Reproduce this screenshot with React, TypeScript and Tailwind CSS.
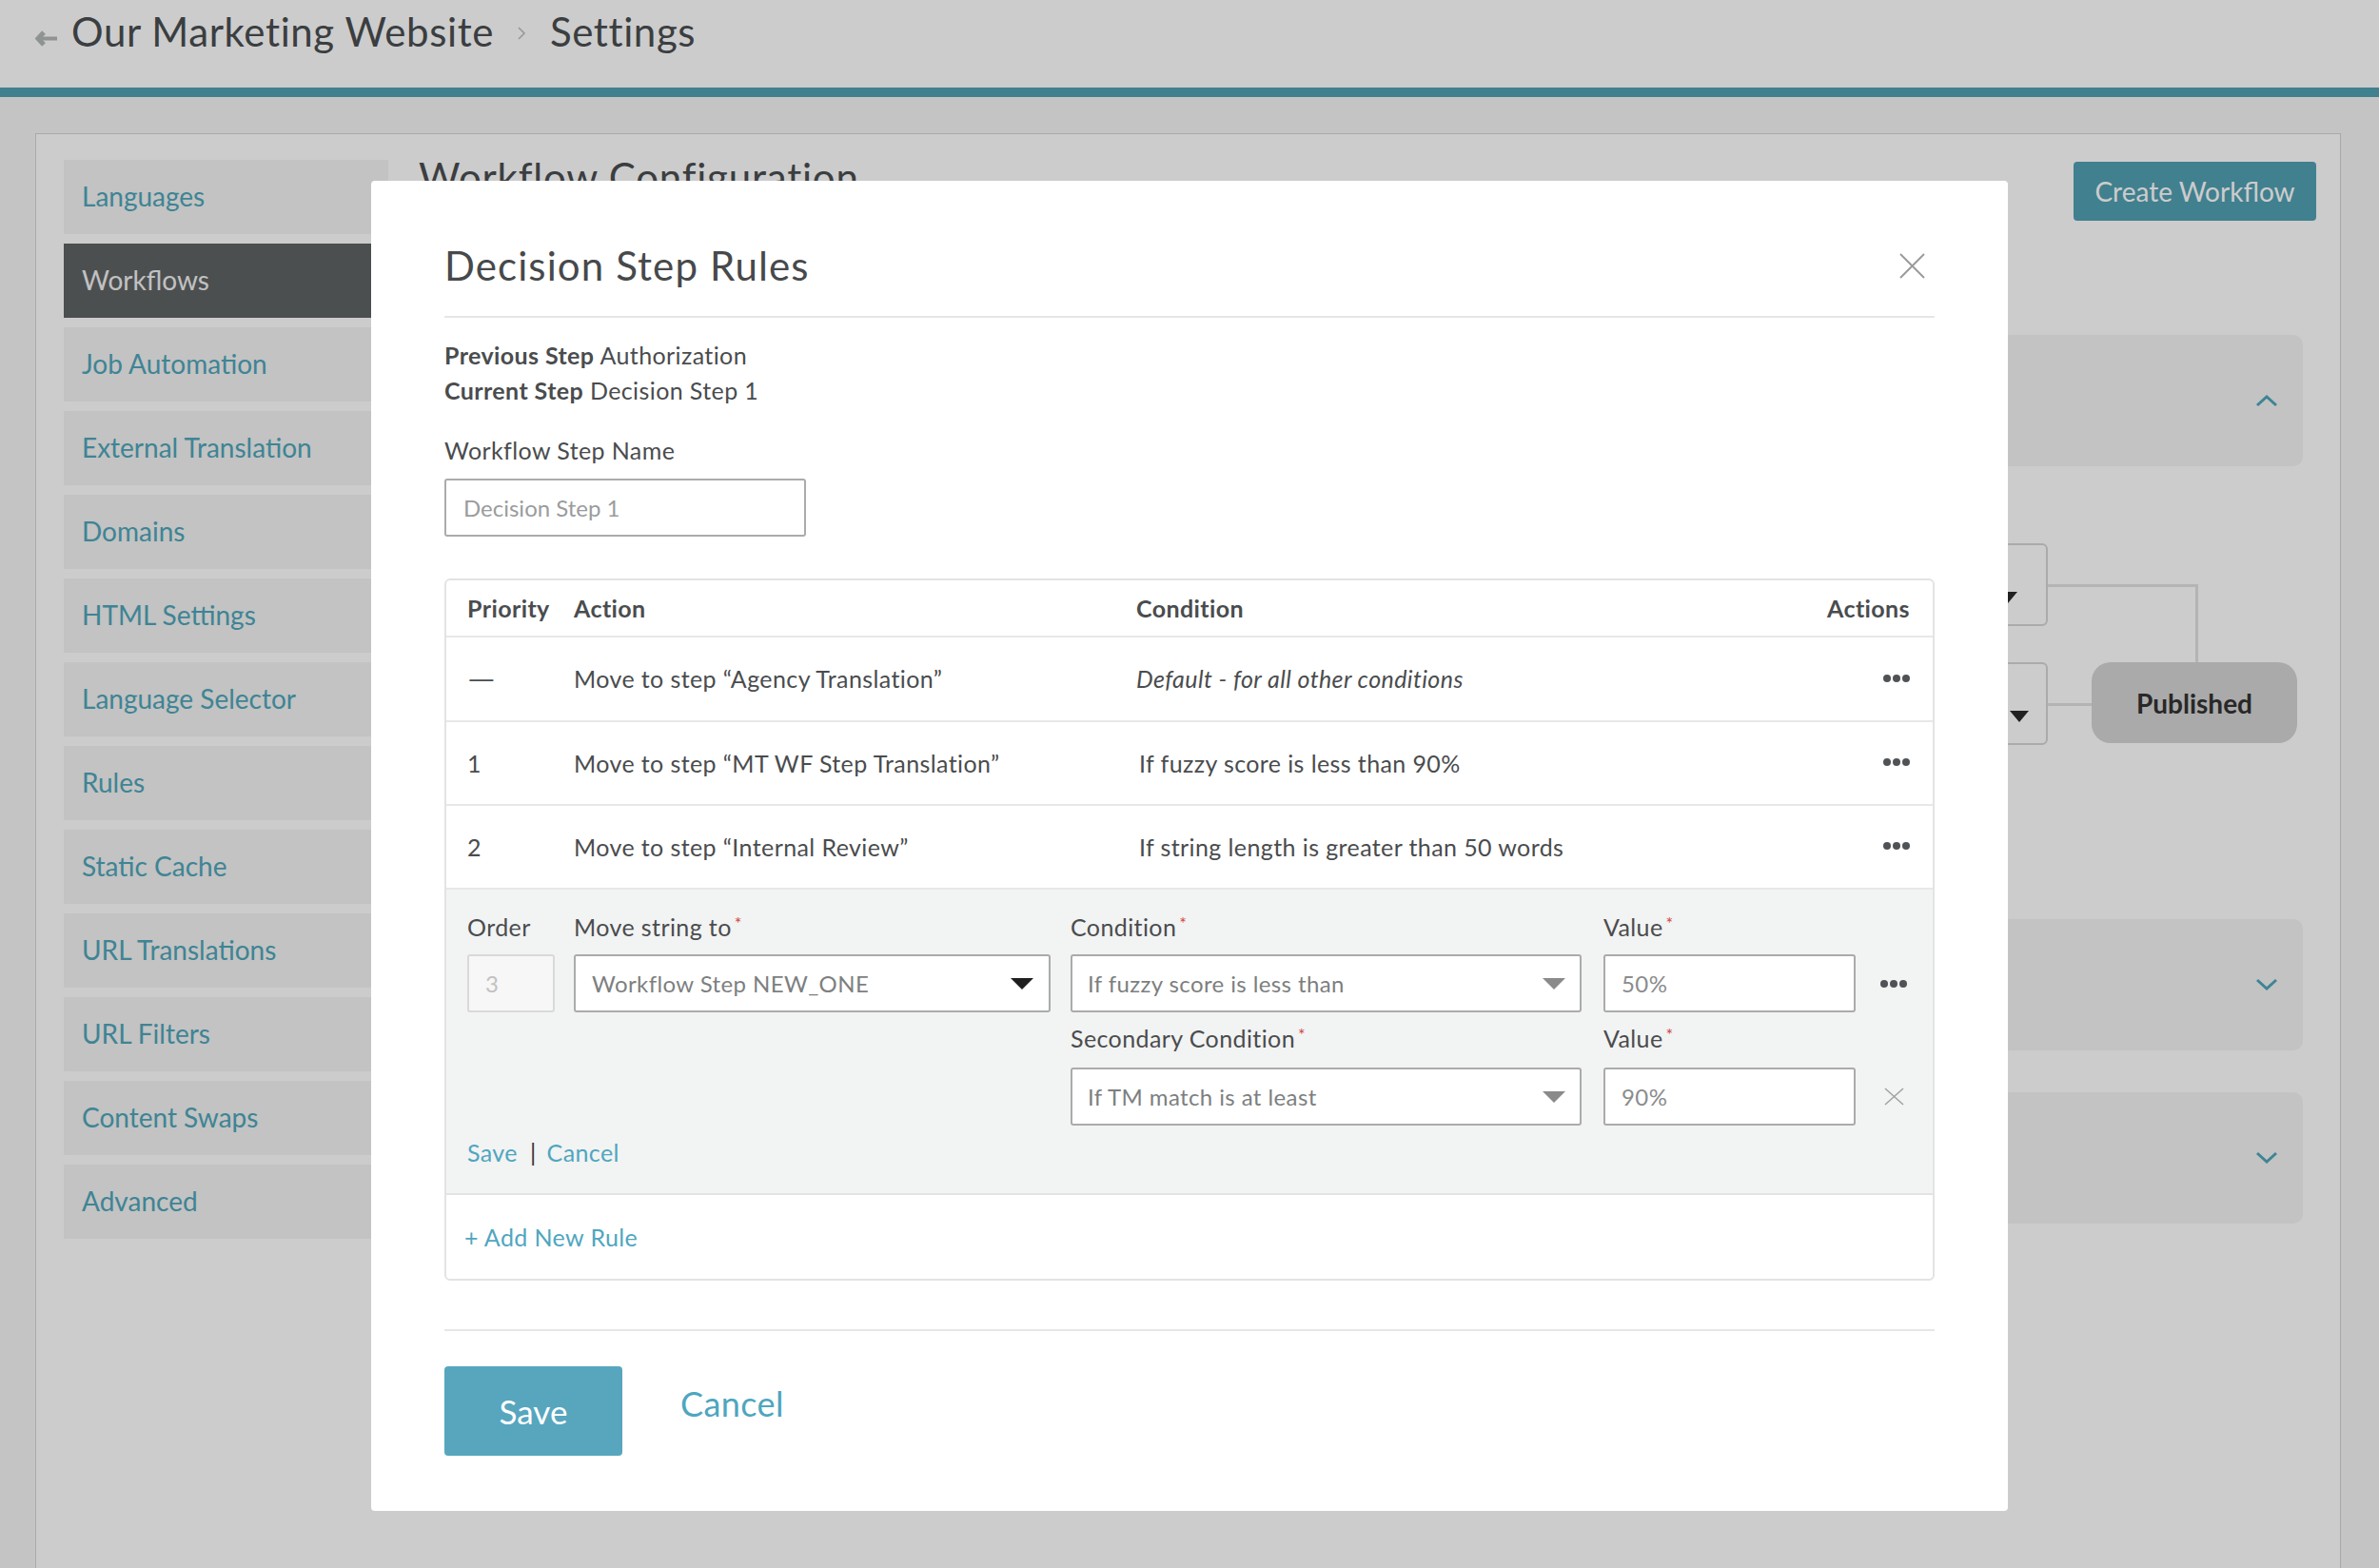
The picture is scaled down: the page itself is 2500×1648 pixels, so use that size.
import React from "react";

const sidebarItems = [
  "Languages",
  "Workflows",
  "Job Automation",
  "External Translation",
  "Domains",
  "HTML Settings",
  "Language Selector",
  "Rules",
  "Static Cache",
  "URL Translations",
  "URL Filters",
  "Content Swaps",
  "Advanced",
];

function Dots() {
  return (
    <div className="flex gap-[2px]">
      <span className="w-[8px] h-[8px] rounded-full bg-[#505355]" />
      <span className="w-[8px] h-[8px] rounded-full bg-[#505355]" />
      <span className="w-[8px] h-[8px] rounded-full bg-[#505355]" />
    </div>
  );
}

function Tri({ color, w = 24 }: { color: string; w?: number }) {
  return (
    <svg width={w} height={12} viewBox="0 0 24 12" preserveAspectRatio="none">
      <path d="M0 0 L24 0 L12 12 Z" fill={color} />
    </svg>
  );
}

function Chevron({ up }: { up?: boolean }) {
  return (
    <svg width={24} height={14} viewBox="0 0 24 14">
      {up ? (
        <polyline points="2,12 12,3 22,12" fill="none" stroke="#4fa5bb" strokeWidth={3} />
      ) : (
        <polyline points="2,2 12,11 22,2" fill="none" stroke="#4fa5bb" strokeWidth={3} />
      )}
    </svg>
  );
}

function Req({ children }: { children: React.ReactNode }) {
  return (
    <div className="text-[25px] leading-[37px] tracking-[0.4px] text-[#4a4c4e]">
      {children}
      <span className="relative -top-[7px] ml-[3px] text-[18px] leading-none text-[#d0453d]">*</span>
    </div>
  );
}

function Select({
  text,
  width,
  tri,
  pl,
  pr,
}: {
  text: string;
  width: string;
  tri: string;
  pl: string;
  pr: string;
}) {
  return (
    <div
      className={`h-[61px] ${width} ${pl} ${pr} border-2 border-[#ababab] rounded-[3px] bg-white flex items-center justify-between`}
    >
      <span className="text-[24px] text-[#7d7f80]">{text}</span>
      <Tri color={tri} />
    </div>
  );
}

export default function App() {
  return (
    <div className="relative w-[2500px] h-[1648px] overflow-hidden bg-[#f5f5f5] font-[Lato,sans-serif] text-[#4a4e51]">
      {/* Header */}
      <header className="h-[92px] bg-white flex items-start pl-[36px] pt-[8px]">
        <svg className="mt-[24px]" width={24} height={17} viewBox="0 0 24 17">
          <polyline points="10,2 4,8.5 10,15" fill="none" stroke="#b4b8b9" strokeWidth={5} />
          <line x1={5} y1={8.5} x2={24} y2={8.5} stroke="#b4b8b9" strokeWidth={4} />
        </svg>
        <span className="ml-[15px] text-[42px] leading-[50px] tracking-[0.6px] text-[#4a4e51]">
          Our Marketing Website
        </span>
        <svg className="ml-[25px] mt-[20px]" width={9} height={14} viewBox="0 0 9 14">
          <polyline points="1,1 7,7 1,13" fill="none" stroke="#bcbfc0" strokeWidth={1.6} />
        </svg>
        <span className="ml-[25px] text-[42px] leading-[50px] tracking-[0.6px] text-[#4a4e51]">Settings</span>
      </header>
      <div className="h-[10px] bg-[#52a1b3]" />

      {/* Panel */}
      <div className="pl-[37px] pr-[40px] pt-[38px]">
        <div className="h-[1600px] bg-white border border-[#d4d4d4] flex pl-[29px] pr-[25px] pt-[27px]">
          <nav className="w-[341px] flex flex-col gap-[10px]">
            {sidebarItems.map((item) => (
              <div
                key={item}
                className={
                  item === "Workflows"
                    ? "h-[78px] flex items-center pl-[19px] pb-[2px] bg-[#5f6364] text-[28px] text-[#f2f2f2]"
                    : "h-[78px] flex items-center pl-[19px] pb-[2px] bg-[#f3f4f3] text-[28px] text-[#4fa5bb]"
                }
              >
                {item}
              </div>
            ))}
          </nav>

          <main className="flex-1 ml-[32px] -mt-[7px]">
            <div className="flex justify-between items-start">
              <h1 className="text-[42px] leading-[50px] tracking-[0.8px] text-[#4a4e51]">Workflow Configuration</h1>
              <button className="mt-[9px] w-[255px] h-[62px] rounded-[4px] bg-[#52a1b3] text-white text-[28px]">
                Create Workflow
              </button>
            </div>
            <div className="mt-[120px] mr-[14px] h-[138px] rounded-[10px] bg-[#f3f4f3] flex items-center justify-end pr-[26px]">
              <Chevron up />
            </div>
            <div className="relative h-[476px] mr-[14px]">
              <div className="absolute left-[1412px] top-[81px] w-[300px] h-[87px] rounded-[6px] border-2 border-[#d6d6d6] bg-white" />
              <div className="absolute left-[1660px] top-[132px]">
                <Tri color="#2a2a2a" w={20} />
              </div>
              <div className="absolute left-[1412px] top-[206px] w-[300px] h-[87px] rounded-[6px] border-2 border-[#d6d6d6] bg-white" />
              <div className="absolute left-[1672px] top-[257px]">
                <Tri color="#2a2a2a" w={20} />
              </div>
              <div className="absolute left-[1712px] top-[124px] w-[158px] h-[3px] bg-[#e1e1e1]" />
              <div className="absolute left-[1867px] top-[124px] w-[3px] h-[82px] bg-[#e1e1e1]" />
              <div className="absolute left-[1712px] top-[249px] w-[46px] h-[3px] bg-[#e1e1e1]" />
              <div className="absolute left-[1758px] top-[206px] w-[216px] h-[85px] rounded-[20px] bg-[#d5d5d5] flex items-center justify-center text-[28px] font-bold text-[#333]">
                Published
              </div>
            </div>
            <div className="mr-[14px] h-[138px] rounded-[10px] bg-[#f3f4f3] flex items-center justify-end pr-[26px]">
              <Chevron />
            </div>
            <div className="mt-[44px] mr-[14px] h-[138px] rounded-[10px] bg-[#f3f4f3] flex items-center justify-end pr-[26px]">
              <Chevron />
            </div>
          </main>
        </div>
      </div>

      {/* Overlay */}
      <div className="absolute inset-0 bg-black/20" />

      {/* Modal */}
      <div className="absolute inset-0 flex justify-center items-start pt-[190px]">
        <div className="w-[1720px] bg-white rounded-[4px] px-[77px] pt-[64px] pb-[58px] text-[#4a4c4e]">
          <div className="flex justify-between items-center pb-[28px] border-b-2 border-[#e6e6e6]">
            <h2 className="text-[42px] leading-[50px] tracking-[1.1px] text-[#47494b]">Decision Step Rules</h2>
            <svg className="mr-[10px]" width={27} height={27} viewBox="0 0 27 27">
              <line x1={1} y1={1} x2={26} y2={26} stroke="#9a9a9a" strokeWidth={2} />
              <line x1={26} y1={1} x2={1} y2={26} stroke="#9a9a9a" strokeWidth={2} />
            </svg>
          </div>

          <div className="mt-[21px] text-[25px] leading-[37px] tracking-[0.4px]">
            <div>
              <span className="font-bold">Previous Step</span> Authorization
            </div>
            <div>
              <span className="font-bold">Current Step</span> Decision Step 1
            </div>
          </div>

          <div className="mt-[26px] text-[25px] leading-[37px] tracking-[0.4px]">Workflow Step Name</div>
          <div className="mt-[11px] w-[380px] h-[61px] border-2 border-[#ababab] rounded-[3px] flex items-center pl-[18px] text-[24px] text-[#9a9c9d]">
            Decision Step 1
          </div>

          {/* Table */}
          <div className="mt-[44px] border-2 border-[#e3e3e3] rounded-[6px] text-[25px] leading-[37px] tracking-[0.4px]">
            <div className="grid grid-cols-[112px_591px_1fr_auto] items-center h-[60px] pl-[22px] pr-[24px] border-b-2 border-[#e8e8e8] font-bold">
              <div>Priority</div>
              <div>Action</div>
              <div>Condition</div>
              <div className="text-right">Actions</div>
            </div>
            <div className="grid grid-cols-[112px_591px_1fr_auto] items-center h-[89px] pl-[22px] pr-[24px] border-b-2 border-[#e8e8e8]">
              <div>
                <span className="inline-block scale-x-[1.5] origin-left">—</span>
              </div>
              <div>Move to step “Agency Translation”</div>
              <div className="italic">Default - for all other conditions</div>
              <div className="-mt-[2px]">
                <Dots />
              </div>
            </div>
            <div className="grid grid-cols-[112px_591px_1fr_auto] items-center h-[88px] pl-[22px] pr-[24px] border-b-2 border-[#e8e8e8]">
              <div>1</div>
              <div>Move to step “MT WF Step Translation”</div>
              <div className="pl-[3px]">If fuzzy score is less than 90%</div>
              <div className="-mt-[2px]">
                <Dots />
              </div>
            </div>
            <div className="grid grid-cols-[112px_591px_1fr_auto] items-center h-[88px] pl-[22px] pr-[24px] border-b-2 border-[#e8e8e8]">
              <div>2</div>
              <div>Move to step “Internal Review”</div>
              <div className="pl-[3px]">If string length is greater than 50 words</div>
              <div className="-mt-[2px]">
                <Dots />
              </div>
            </div>

            {/* Edit row */}
            <div className="bg-[#f2f3f3] border-b-2 border-[#e3e3e3] pl-[22px] pt-[21px] pb-[24px]">
              <div className="grid grid-cols-[112px_522px_560px_291px_28px]">
                <div className="text-[25px] leading-[37px]">Order</div>
                <Req>Move string to</Req>
                <Req>Condition</Req>
                <Req>Value</Req>
                <div />

                <div className="mt-[10px] w-[92px] h-[61px] border-2 border-[#d9d9d9] rounded-[3px] bg-[#f7f7f7] flex items-center pl-[17px] text-[24px] text-[#c2c2c2]">
                  3
                </div>
                <div className="mt-[10px]">
                  <Select text="Workflow Step NEW_ONE" width="w-[501px]" tri="#1e1e1e" pl="pl-[17px]" pr="pr-[16px]" />
                </div>
                <div className="mt-[10px]">
                  <Select text="If fuzzy score is less than" width="w-[537px]" tri="#8a8a8a" pl="pl-[16px]" pr="pr-[15px]" />
                </div>
                <div className="mt-[10px] w-[265px] h-[61px] border-2 border-[#ababab] rounded-[3px] bg-white flex items-center pl-[17px] text-[24px] text-[#8a8c8d]">
                  50%
                </div>
                <div className="mt-[10px] flex items-center">
                  <Dots />
                </div>

                <div />
                <div />
                <div className="mt-[9px]">
                  <Req>Secondary Condition</Req>
                </div>
                <div className="mt-[9px]">
                  <Req>Value</Req>
                </div>
                <div />

                <div />
                <div />
                <div className="mt-[12px]">
                  <Select text="If TM match is at least" width="w-[537px]" tri="#8a8a8a" pl="pl-[16px]" pr="pr-[15px]" />
                </div>
                <div className="mt-[12px] w-[265px] h-[61px] border-2 border-[#ababab] rounded-[3px] bg-white flex items-center pl-[17px] text-[24px] text-[#8a8c8d]">
                  90%
                </div>
                <div className="mt-[12px] flex items-center justify-center">
                  <svg width={21} height={19} viewBox="0 0 21 19">
                    <line x1={1} y1={1} x2={20} y2={18} stroke="#a3a3a3" strokeWidth={1.6} />
                    <line x1={20} y1={1} x2={1} y2={18} stroke="#a3a3a3" strokeWidth={1.6} />
                  </svg>
                </div>

                <div className="col-span-5 mt-[10px] text-[25px] leading-[37px] flex">
                  <span className="text-[#4fa6bf]">Save</span>
                  <span className="ml-[13px] text-[#333]">|</span>
                  <span className="ml-[11px] text-[#4fa6bf]">Cancel</span>
                </div>
              </div>
            </div>

            <div className="h-[88px] flex items-center pl-[19px] text-[#4fa6bf]">+ Add New Rule</div>
          </div>

          <div className="mt-[51px] border-t-2 border-[#e6e6e6]" />
          <div className="mt-[37px] flex items-start">
            <button className="w-[187px] h-[94px] rounded-[4px] bg-[#57a6be] text-white text-[35px]">Save</button>
            <span className="ml-[61px] mt-[17px] text-[36px] leading-[44px] tracking-[0.4px] text-[#4fa6bf]">
              Cancel
            </span>
          </div>
        </div>
      </div>
    </div>
  );
}
